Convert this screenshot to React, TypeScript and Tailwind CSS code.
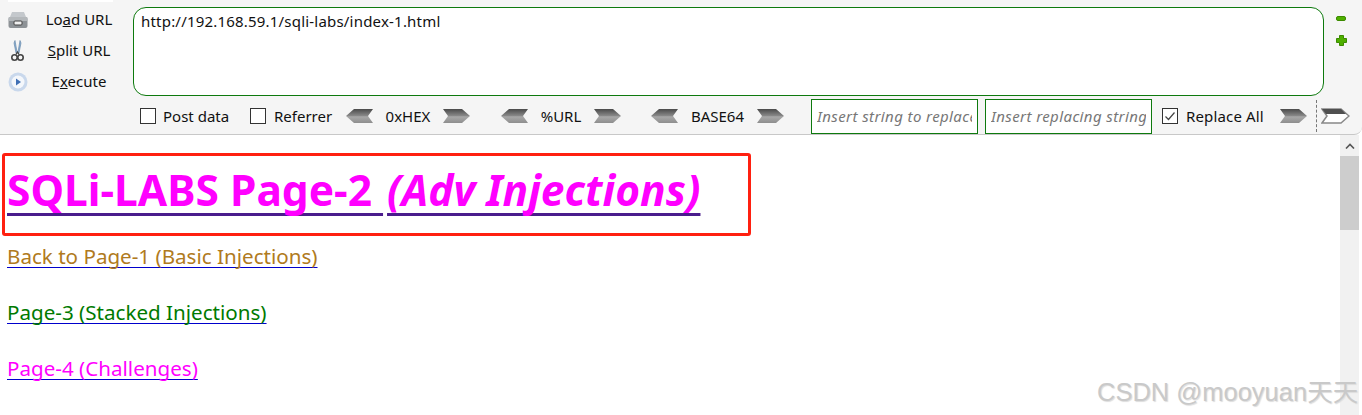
const Chevron = ({ dir, white }: { dir: "left" | "right"; white?: boolean }) => {
  const id = `${dir}${white ? "W" : ""}`;
  const points = dir === "left" ? "9,1 28,1 23,8 28,15 9,15 1,8" : "1,1 20,1 28,8 20,15 1,15 6,8";
  return (
    <svg width="29" height="16" viewBox="0 0 29 16" className="shrink-0">
      <defs>
        <linearGradient id={id} x1="0" y1="0" x2="0" y2="1">
          <stop offset="0" stopColor="#4a4a4a" />
          <stop offset="0.5" stopColor="#8a8a8a" />
          <stop offset="0.55" stopColor="#a8a8a8" />
          <stop offset="1" stopColor="#8e8e8e" />
        </linearGradient>
      </defs>
      {white ? (
        <>
          <polygon points={points} fill="#fff" stroke="#888" strokeWidth="1.5" />
          <polygon points="1,1 20,1 25,6 5,6" fill="#505050" />
        </>
      ) : (
        <polygon points={points} fill={`url(#${id})`} />
      )}
    </svg>
  );
};

const Box = ({ checked }: { checked?: boolean }) => (
  <span className="w-[16px] h-[16px] shrink-0 border border-[#333] bg-white flex items-center justify-center">
    {checked && (
      <svg width="12" height="12" viewBox="0 0 12 12">
        <path d="M1.5 6.5 L4.5 9.5 L10.5 2.5" fill="none" stroke="#444" strokeWidth="1.2" />
      </svg>
    )}
  </span>
);

const LoadIcon = () => (
  <svg width="20" height="18" viewBox="0 0 20 18">
    <path d="M4 1 H16 L18 6 H2 Z" fill="#c4c8cc" />
    <rect x="0.5" y="6" width="19" height="11" rx="2" fill="#8d9296" />
    <rect x="0.5" y="6" width="19" height="4" rx="1" fill="#b4b8bb" />
    <rect x="6" y="10" width="8" height="4" rx="1" fill="#f0f0f0" stroke="#444" strokeWidth="1" />
  </svg>
);

const ScissorsIcon = () => (
  <svg width="13" height="22" viewBox="0 0 13 22">
    <path d="M4 0.5 L6 12 L5 13 L3 3 Z" fill="#8fb3d6" stroke="#5c7fa3" strokeWidth="0.6" />
    <path d="M9 0.5 L7 12 L8 13 L10 3 Z" fill="#8fb3d6" stroke="#5c7fa3" strokeWidth="0.6" />
    <circle cx="3.5" cy="17.5" r="2.7" fill="none" stroke="#444" strokeWidth="1.6" />
    <circle cx="9.5" cy="17.5" r="2.7" fill="none" stroke="#444" strokeWidth="1.6" />
    <path d="M5 14.5 L6.5 12 L8 14.5" fill="none" stroke="#444" strokeWidth="1.4" />
  </svg>
);

const ExecuteIcon = () => (
  <svg width="20" height="20" viewBox="0 0 20 20">
    <circle cx="10" cy="10" r="9.5" fill="#c9d8ec" />
    <circle cx="10" cy="10" r="6.5" fill="#f4f7fb" />
    <path d="M8 6.5 L13 10 L8 13.5 Z" fill="#3f6fb5" />
  </svg>
);

const Tool = ({ icon, children }: { icon: React.ReactNode; children: React.ReactNode }) => (
  <div className="h-[31px] flex items-center">
    <div className="w-[28px] ml-[8px] -mr-[8px] flex justify-start shrink-0">{icon}</div>
    <div className="flex-1 text-center pr-[3px]">{children}</div>
  </div>
);

const linkClass = "self-start underline decoration-[#0000cc] decoration-[1px] underline-offset-[3px] [text-decoration-skip-ink:none]";

export default function App() {
  return (
    <div className="relative w-[1362px] h-[415px] overflow-hidden bg-white font-['Noto_Sans','Open_Sans',sans-serif] text-[15px] text-[#111]">
      <div className="relative h-[135px] flex flex-col bg-[#f5f5f5] border-b border-[#c8c8c8] rounded-br-[8px]">
        <div className="absolute left-[8px] top-0 w-[105px] h-[2px] bg-white" />
        <div className="flex h-[98px] pt-[7px]">
          <div className="w-[133px] shrink-0 flex flex-col -mt-[3px]">
            <Tool icon={<LoadIcon />}>
              Lo<span className="underline">a</span>d URL
            </Tool>
            <Tool icon={<span className="pl-[3px] flex"><ScissorsIcon /></span>}>
              <span className="underline">S</span>plit URL
            </Tool>
            <Tool icon={<ExecuteIcon />}>
              E<span className="underline">x</span>ecute
            </Tool>
          </div>
          <div className="w-[1191px] h-[89px] shrink-0 bg-white border border-[#0e7a0e] rounded-[13px] pl-[7px] pt-[2px] text-[15px] tracking-[0.2px]">
            http://192.168.59.1/sqli-labs/index-1.html
          </div>
          <div className="flex-1 flex flex-col items-start pl-[12px] pt-[9px] gap-[14px]">
            <span className="w-[10px] h-[5px] rounded-[2px] bg-[#4fb000] border border-[#3c8a00]" />
            <svg width="11" height="11" viewBox="0 0 11 11">
              <path d="M3.5 0.5 H7.5 V3.5 H10.5 V7.5 H7.5 V10.5 H3.5 V7.5 H0.5 V3.5 H3.5 Z" fill="#4fb000" stroke="#3c8a00" strokeLinejoin="round" />
            </svg>
          </div>
        </div>
        <div className="flex items-center h-[36px] pl-[140px]">
          <Box />
          <span className="ml-[7px] w-[67px]">Post data</span>
          <span className="ml-[20px]"><Box /></span>
          <span className="ml-[8px] w-[58px]">Referrer</span>
          <span className="ml-[13px] flex"><Chevron dir="left" /></span>
          <span className="w-[68px] text-center">0xHEX</span>
          <Chevron dir="right" />
          <span className="ml-[29px]"><Chevron dir="left" /></span>
          <span className="w-[64px] text-center">%URL</span>
          <Chevron dir="right" />
          <span className="ml-[28px]"><Chevron dir="left" /></span>
          <span className="w-[77px] text-center">BASE64</span>
          <Chevron dir="right" />
          <input
            readOnly
            placeholder="Insert string to replace"
            className="ml-[26px] w-[167px] h-[35px] bg-white border border-[#0e7a0e] px-[5px] italic outline-none placeholder:text-[#777] placeholder:tracking-[0.4px]"
          />
          <input
            readOnly
            placeholder="Insert replacing string"
            className="ml-[7px] w-[167px] h-[35px] bg-white border border-[#0e7a0e] px-[5px] italic outline-none placeholder:text-[#777] placeholder:tracking-[0.4px]"
          />
          <span className="ml-[10px]"><Box checked /></span>
          <span className="ml-[8px] w-[80px] whitespace-nowrap tracking-[0.15px]">Replace All</span>
          <span className="ml-[13px] flex"><Chevron dir="right" /></span>
          <span className="ml-[8px] h-[32px] border-l border-dashed border-[#777]" />
          <span className="ml-[4px] flex"><Chevron dir="right" white /></span>
        </div>
      </div>

      <div className="flex h-[280px]">
        <div className="flex-1 pl-[7px]">
          <h1 className="mt-[28px] text-[42.5px] leading-[54px] font-bold text-[#ff00ff] underline decoration-[#4a1c8c] decoration-[3px] underline-offset-[7px] [text-decoration-skip-ink:none]">
            SQLi-LABS Page-2 <em className="ml-[4px]">(Adv Injections)</em>
          </h1>
          <div className="mt-[25px] flex flex-col gap-[28px] text-[20.6px] leading-[28px]">
            <a className={`${linkClass} text-[#b07a20]`}>Back to Page-1 (Basic Injections)</a>
            <a className={`${linkClass} text-[#007a00]`}>Page-3 (Stacked Injections)</a>
            <a className={`${linkClass} text-[#ff00ff]`}>Page-4 (Challenges)</a>
          </div>
        </div>
        <div className="w-[19px] mr-[3px] shrink-0 bg-[#f1f1f1] flex flex-col">
          <div className="h-[21px] flex items-center justify-center">
            <svg width="10" height="6" viewBox="0 0 10 6">
              <path d="M1 5.5 L5 1.5 L9 5.5" fill="none" stroke="#555" strokeWidth="1.6" />
            </svg>
          </div>
          <div className="h-[74px] bg-[#cdcdcd]" />
        </div>
      </div>

      {/* annotation + watermark sit over the page */}
      <div className="absolute left-[2px] top-[153px] w-[749px] h-[83px] border-[3px] border-[#ff2010] rounded-[3px]" />
      <div className="absolute left-[1097px] top-[376px] text-[25.5px] leading-[32px] whitespace-nowrap text-[#c9c9c9] font-['Liberation_Sans','Noto_Sans_CJK_SC',sans-serif] [text-shadow:1px_1px_1px_#ddd]">
        CSDN @mooyuan天天
      </div>
    </div>
  );
}
